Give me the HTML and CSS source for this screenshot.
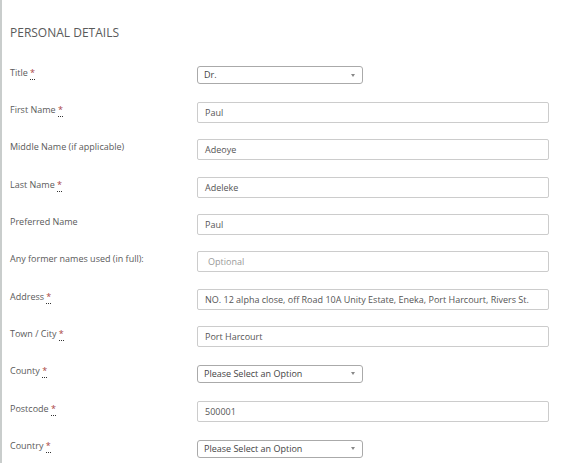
FILE: index.html
```html
<!DOCTYPE html>
<html lang="en">
<head>
<meta charset="utf-8">
<title>Personal Details</title>
<link rel="stylesheet" href="styles.css">
</head>
<body>
<div class="panel">
  <h2 class="heading">PERSONAL DETAILS</h2>
  <div class="form">
    <div class="row">
      <label class="label">Title <abbr class="req" title="required">*</abbr></label>
      <div class="select"><span>Dr.</span><span class="caret"></span></div>
    </div>
    <div class="row">
      <label class="label">First Name <abbr class="req" title="required">*</abbr></label>
      <div class="input">Paul</div>
    </div>
    <div class="row">
      <label class="label">Middle Name (if applicable)</label>
      <div class="input">Adeoye</div>
    </div>
    <div class="row">
      <label class="label">Last Name <abbr class="req" title="required">*</abbr></label>
      <div class="input">Adeleke</div>
    </div>
    <div class="row">
      <label class="label">Preferred Name</label>
      <div class="input">Paul</div>
    </div>
    <div class="row">
      <label class="label">Any former names used (in full):</label>
      <div class="input placeholder">Optional</div>
    </div>
    <div class="row">
      <label class="label">Address <abbr class="req" title="required">*</abbr></label>
      <div class="input">NO. 12 alpha close, off Road 10A Unity Estate, Eneka, Port Harcourt, Rivers St.</div>
    </div>
    <div class="row">
      <label class="label">Town / City <abbr class="req" title="required">*</abbr></label>
      <div class="input">Port Harcourt</div>
    </div>
    <div class="row">
      <label class="label">County <abbr class="req" title="required">*</abbr></label>
      <div class="select"><span>Please Select an Option</span><span class="caret"></span></div>
    </div>
    <div class="row">
      <label class="label">Postcode <abbr class="req" title="required">*</abbr></label>
      <div class="input">500001</div>
    </div>
    <div class="row">
      <label class="label">Country <abbr class="req" title="required">*</abbr></label>
      <div class="select"><span>Please Select an Option</span><span class="caret"></span></div>
    </div>
  </div>
</div>
</body>
</html>
```
FILE: styles.css
```css
html, body {
  margin: 0;
  padding: 0;
  background: #fff;
}
body {
  font-family: "Open Sans", "Liberation Sans", sans-serif;
  color: #555;
}
.panel {
  border-left: 2px solid #c9cdcc;
  min-height: 463px;
  padding: 0 0 0 8px;
  box-sizing: border-box;
}
.heading {
  margin: 0;
  padding-top: 25px;
  font-size: 12px;
  font-weight: 400;
  line-height: 16px;
  color: #5a5a5a;
  letter-spacing: 0;
}
.form {
  display: flex;
  flex-direction: column;
  padding-top: 15.5px;
}
.row {
  display: flex;
  align-items: center;
  height: 37.35px;
}
.label {
  width: 187px;
  flex: none;
  font-size: 9px;
  line-height: 12px;
  color: #5a5a5a;
  padding-bottom: 5px;
}
.req {
  color: #a94442;
  text-decoration: none;
  border-bottom: 1px dotted #333;
  cursor: help;
}
.input {
  width: 352px;
  height: 21px;
  box-sizing: border-box;
  border: 1px solid #ccc;
  border-radius: 2px;
  padding: 0 7px;
  font-size: 9px;
  line-height: 19px;
  color: #555;
  white-space: nowrap;
  overflow: hidden;
}
.placeholder {
  color: #999;
  padding-left: 10px;
}
.select {
  width: 166px;
  height: 18px;
  box-sizing: border-box;
  border: 1px solid #aaa;
  border-radius: 3px;
  padding: 0 6px 0 6px;
  font-size: 9px;
  line-height: 16px;
  color: #444;
  display: flex;
  justify-content: space-between;
  align-items: center;
}
.caret {
  width: 0;
  height: 0;
  border-left: 2.5px solid transparent;
  border-right: 2.5px solid transparent;
  border-top: 3px solid #888;
  margin-right: 1px;
}
```
